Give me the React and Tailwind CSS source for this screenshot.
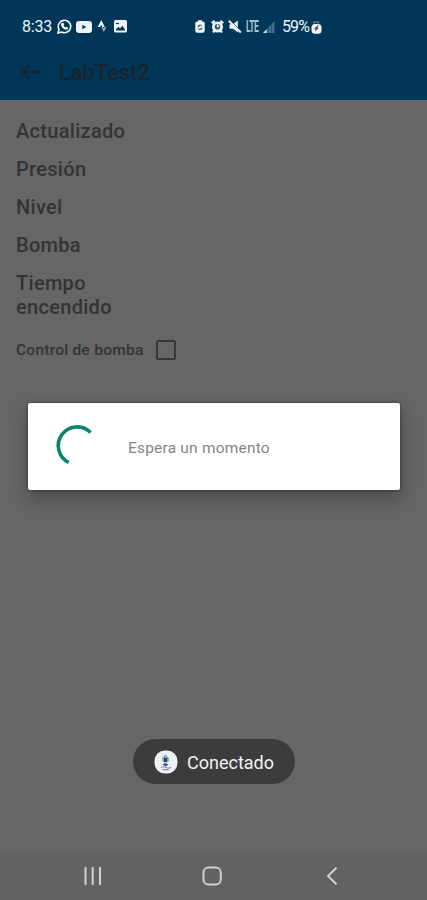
const readings = ['Actualizado', 'Presión', 'Nivel', 'Bomba', 'Tiempo encendido'];

function StatusBar() {
  return (
    <div className="flex h-[54px] items-center pl-[22px] text-[#eef5fa]">
      <span className="w-[35px] text-[16px] tracking-[-0.2px]">8:33</span>

      {/* WhatsApp */}
      <svg className="mb-[1px] h-[15px] w-[15px]" viewBox="0 0 15 15" fill="none">
        <path d="M1 14l1-3.6A6.2 6.2 0 1 1 4.6 13z" stroke="currentColor" strokeWidth="1.6" />
        <path d="M5.3 3.8l1.3.2.6 1.7-.7.8c.5 1 1.2 1.6 2.1 2.1l.8-.8 1.8.9c.1 1.3-.8 2-2 2C6.5 10.5 4 7.8 4 5.5c0-.8.5-1.5 1.3-1.7z" fill="currentColor" />
      </svg>
      {/* YouTube */}
      <svg className="mb-[1px] ml-[4px] h-[12px] w-[16px]" viewBox="0 0 16 12">
        <rect width="16" height="12" rx="3.2" fill="currentColor" />
        <path d="M6.3 3.7v4.6L10.3 6z" fill="#003657" />
      </svg>
      {/* Strava */}
      <svg className="mb-[1px] ml-[5px] h-[13px] w-[10px]" viewBox="0 0 10 14">
        <path d="M4.2 0L8 7.5H5.5L4.2 5 3 7.5H.4z" fill="currentColor" />
        <path d="M4.5 7.5H6l1 2.2 1-2.2h1.5L7 12.8z" fill="currentColor" opacity="0.7" />
      </svg>
      {/* Gallery */}
      <svg className="mb-[1px] ml-[7px] h-[13px] w-[13px]" viewBox="0 0 13 13">
        <rect width="13" height="12.5" rx="1.5" fill="currentColor" />
        <path d="M2 9.5l2.3-2.7L6 8.4l2.3-2.6L11 9.5v1H2z" fill="#003657" />
        <path d="M2 3.5h3" stroke="#003657" strokeWidth="1.2" />
      </svg>

      {/* Battery saver */}
      <svg className="mb-[1px] ml-[68px] h-[13px] w-[10px]" viewBox="0 0 10 13">
        <path d="M3 1.5V.3h4v1.2h.7C9 1.5 9.7 2.3 9.7 3.5v7.2c0 1.2-.7 2-2 2H2.3c-1.3 0-2-.8-2-2V3.5c0-1.2.7-2 2-2z" fill="currentColor" />
        <path d="M3 6.3c.3-1.5 3.3-1.8 4 0M7 8.3c-.3 1.5-3.3 1.8-4 0M3 6.3h1.5M7 8.3H5.5" stroke="#003657" strokeWidth="0.9" fill="none" />
      </svg>
      {/* Alarm */}
      <svg className="mb-[1px] ml-[6px] h-[13px] w-[13px]" viewBox="0 0 13 13" fill="none">
        <path d="M.8 3.2L3.7.8M12.2 3.2L9.3.8M2 12.5l2-2.5M11 12.5L9 10" stroke="currentColor" strokeWidth="2.2" />
        <circle cx="6.5" cy="7" r="5.5" fill="currentColor" />
        <circle cx="6.5" cy="6.8" r="2.8" fill="#31566f" />
        <path d="M6.5 7.5V4.5M6.2 7l2-1.2" stroke="currentColor" strokeWidth="1.2" />
      </svg>
      {/* Muted */}
      <svg className="mb-[1px] ml-[4px] h-[13px] w-[14px]" viewBox="0 0 14 13" fill="none">
        <path d="M1.5 4.3h3.5L9.8.5v11.9L5 8.7H1.5z" fill="currentColor" />
        <path d="M2 0l12 12" stroke="#003657" strokeWidth="0.8" />
        <path d="M.8.8l12 11.7" stroke="currentColor" strokeWidth="2" />
      </svg>
      <span className="ml-[4px] inline-block w-[13px] origin-left scale-x-[0.54] text-[16px] font-bold tracking-[-1px] text-[#a9c0cf]">
        LTE
      </span>
      {/* Signal */}
      <svg className="ml-[4px] h-[12px] w-[12px]" viewBox="0 0 12 12">
        <path d="M11.5 0v12H0z" fill="#426f8d" />
        <path d="M3.5 8.4V12H0z" fill="#dce8ef" />
        <path d="M5.5 6v6M8.5 3v9" stroke="#174b6c" strokeWidth="0.7" />
      </svg>
      <span className="ml-[7px] w-[29px] text-[16px] tracking-[-0.9px]">59%</span>
      {/* Battery */}
      <svg className="h-[13px] w-[11px]" viewBox="0 0 11 13">
        <path d="M3 2.5V1h4.5v1.5" stroke="#7896aa" strokeWidth="1.2" fill="none" />
        <rect x="0.5" y="3" width="10" height="9.7" rx="3.5" fill="currentColor" />
        <path d="M8 3.5L3.3 7.3l1 1L3.8 10.5l3.7-3.2-.8-1z" fill="#4b5960" />
      </svg>
    </div>
  );
}

function WaitDialog() {
  return (
    <div className="absolute top-[403px] left-[28px] flex h-[87px] w-[372px] items-center rounded-[2px] bg-white shadow-[0_8px_18px_2px_rgba(0,0,0,0.25),0_0_3px_rgba(0,0,0,0.5)]">
      <svg className="mb-[1px] ml-[26px] h-[44px] w-[44px]" viewBox="0 0 44 44" fill="none">
        <path d="M36.5 8.5A18.8 18.8 0 1 0 14.7 38.5" stroke="#0b8272" strokeWidth="3.6" />
      </svg>
      <span className="mt-[5px] ml-[30px] text-[15.5px] tracking-[0.2px] text-[#858585]">Espera un momento</span>
    </div>
  );
}

function Toast() {
  return (
    <div className="absolute top-[739px] left-[133px] flex h-[45px] w-[162px] items-center rounded-full bg-[#3c3c3c] pl-[21px]">
      <svg className="h-[24px] w-[24px]" viewBox="0 0 24 24" fill="none">
        <rect x="0.5" y="0.5" width="23" height="23" rx="10.5" fill="#f0f0f0" />
        <path d="M11.5 4L8 8v3.5h7V8z" fill="#76bfc8" />
        <path d="M10 8l3 4M13 8l-3 4" stroke="#273351" strokeWidth="1.5" />
        <path d="M8.5 14.5l3-1.5 3 1.5-3 2z" fill="#38558d" />
        <path d="M7 17.5q2.5-1.5 5 0t5-.3M8.5 19.7h6" stroke="#858baf" strokeWidth="1.2" />
      </svg>
      <span className="mt-[1px] ml-[9px] text-[18px] text-[#f2f2f2]">Conectado</span>
    </div>
  );
}

function NavigationBar() {
  return (
    <nav className="flex h-[48px] items-center bg-[#626262] pl-[83px] text-[#cfcfcf]">
      <svg className="h-[20px] w-[20px]" viewBox="0 0 20 20" stroke="currentColor" strokeWidth="2">
        <path d="M2.5 1v18M9.7 1v18M17 1v18" />
      </svg>
      <svg className="ml-[99px] h-[20px] w-[20px]" viewBox="0 0 20 20" fill="none" stroke="currentColor" strokeWidth="2">
        <rect x="1.5" y="1.5" width="17.3" height="17" rx="5" />
      </svg>
      <svg className="ml-[103px] h-[20px] w-[13px]" viewBox="0 0 13 20" fill="none" stroke="currentColor" strokeWidth="2">
        <path d="M11.5 1.8L3 10l8.5 8.2" />
      </svg>
    </nav>
  );
}

function App() {
  return (
    <div className="relative flex h-[900px] w-full flex-col overflow-hidden bg-[#666666] font-[Roboto,sans-serif]">
      <header className="h-[100px] bg-[#003657]">
        <StatusBar />
        <div className="flex h-[36px] items-center pl-[21px] text-[#17242c]">
          <svg className="h-[16px] w-[18px]" viewBox="0 0 18 16" fill="none" stroke="currentColor" strokeWidth="2">
            <path d="M17 8H2M8.5 1.2L1.7 8l6.8 6.8" />
          </svg>
          <h1 className="ml-[20px] text-[22px] font-medium tracking-[-0.1px]">LabTest2</h1>
        </div>
      </header>

      <main className="flex-1 px-4 pt-[19px] text-[#343434]">
        <div className="flex w-[120px] flex-col gap-[14px] text-[20px] leading-6 font-medium tracking-[0.3px]">
          {readings.map((label) => (
            <p key={label}>{label}</p>
          ))}
        </div>
        <div className="mt-[19px] flex items-center">
          <span className="mt-[1px] w-[140px] text-[15.5px] font-medium tracking-[0.25px]">Control de bomba</span>
          <span className="h-[20px] w-[20px] rounded-[2px] border-2 border-[#393939]" />
        </div>
      </main>

      <NavigationBar />
      <WaitDialog />
      <Toast />
    </div>
  );
}

export default App;
